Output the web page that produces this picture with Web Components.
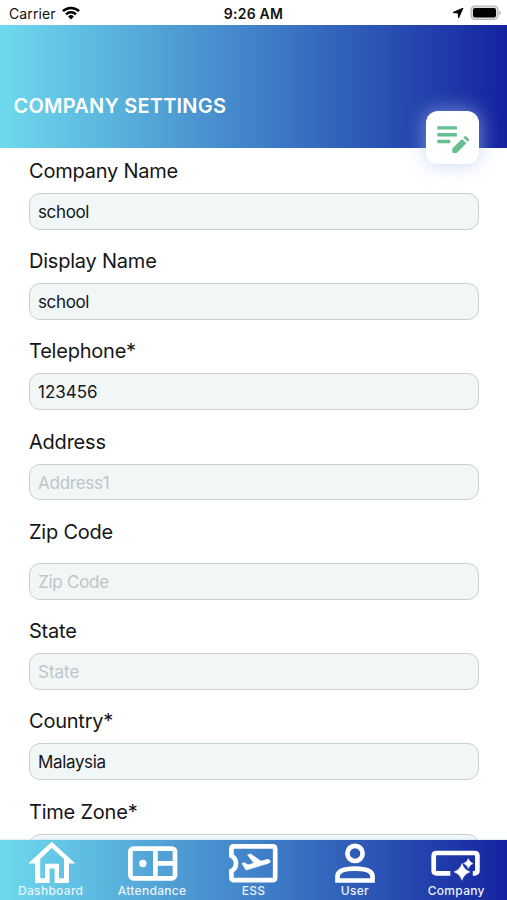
<!DOCTYPE html>
<html lang="en">
<head>
<meta charset="utf-8">
<title>Company Settings</title>
<style>
html,body{margin:0;height:100%}
body{background:#fff;overflow:hidden;font-family:Inter,"Liberation Sans",sans-serif}
</style>
</head>
<body>
<settings-app></settings-app>
<script>
const define = (name, html, setup) => customElements.define(name, class extends HTMLElement {
  connectedCallback() {
    if (this.shadowRoot) return;
    this.attachShadow({ mode: 'open' }).innerHTML = html;
    if (setup) setup(this, this.shadowRoot);
  }
});

define('status-bar', `
<style>
:host{display:grid;grid-template-columns:1fr auto 1fr;align-items:center;height:25px;padding:2px 6px 0 9px;box-sizing:border-box;color:#111;font-size:14px;line-height:20px}
.left,.right{display:flex;align-items:center}
.left{gap:6px;letter-spacing:.1px}
.right{justify-content:flex-end;gap:6px}
b{font-weight:600;font-size:14px;letter-spacing:.25px;margin-right:3px}
svg{display:block;margin-top:-1px}
</style>
<div class="left"><span>Carrier</span>
<svg width="18" height="14" viewBox="0 0 18 14" fill="none" stroke="#000" stroke-width="2.5"><path d="M.9 5.2a11.6 11.6 0 0 1 16.2 0M4 8.3a7.2 7.2 0 0 1 10 0"/><path d="M6.1 10.4a4.2 4.2 0 0 1 5.8 0L9 13.4z" fill="#000" stroke="none"/></svg></div>
<b>9:26 AM</b>
<div class="right">
<svg width="12" height="12" viewBox="0 0 12 12"><path d="M11 1.2 6.6 10.8 6.2 6 1 5.5z" fill="#000" stroke="#000" stroke-width="1" stroke-linejoin="round"/></svg>
<svg width="31" height="16" viewBox="0 0 31 16"><rect x="1" y="1" width="27" height="13.5" rx="4" fill="#ddd" stroke="#b4b4b4" stroke-width="1.2"/><rect x="3" y="3" width="23" height="9.5" rx="2" fill="#000"/><path d="M29.3 5.4q1.5.8 1.5 2.4t-1.5 2.4z" fill="#aaa"/></svg>
</div>`);

define('page-header', `
<style>
:host{display:block;position:relative;height:122.5px;padding:68.5px 13.5px 0;box-sizing:border-box;background:var(--bar-gradient);color:#fff}
h1{margin:0;font-size:20px;line-height:24px;font-weight:600;letter-spacing:.22px;white-space:nowrap}
::slotted([slot=action]){position:absolute;right:28px;top:85.5px}
</style>
<h1><slot></slot></h1><slot name="action"></slot>`);

define('edit-button', `
<style>
:host{display:block;width:53px;height:53px;border-radius:12px;background:#fff;box-shadow:0 0 19px 1px rgba(175,192,240,.62)}
svg{display:block}
</style>
<svg width="53" height="53" viewBox="0 0 53 53" fill="#66bf91"><path d="M11.3 15.2h19.6v3.4H11.3zM11.3 22.1h19.6v3.4H11.3zM11.3 28.8h12.9v3.4H11.3z"/><path d="M26.3 37.6 36 27.9l4.4 4.4-9.7 9.7H27.3q-1 0-1-1zM37.3 26.6l1.2-1.2q.9-.8 1.8 0l2.4 2.4q.8.9 0 1.8l-1.2 1.2z"/></svg>`);

define('form-field', `
<style>
:host{display:flex;flex-direction:column;gap:var(--field-gap,9px);color:#151617}
label{font-size:20px;line-height:25px;letter-spacing:-.22px;white-space:nowrap}
.box{height:36.5px;box-sizing:border-box;border:1.4px solid #c8d0d1;border-radius:11px;background:#f1f6f7;padding:1px 8px 0;font-size:17px;line-height:34px;letter-spacing:-.25px;white-space:nowrap}
.empty{color:#bfc5c7}
</style>
<label></label><div class="box"><span></span></div>`, (el, root) => {
  const label = root.querySelector('label'), value = root.querySelector('span');
  label.textContent = el.getAttribute('label');
  value.textContent = el.getAttribute('value') || el.getAttribute('placeholder');
  if (el.hasAttribute('spacing')) value.style.letterSpacing = el.getAttribute('spacing');
  if (!el.hasAttribute('value')) root.querySelector('.box').classList.add('empty');
});

define('nav-item', `
<style>
:host{display:flex;flex-direction:column;align-items:center;width:101.4px;color:#fff;font-size:12px;line-height:14px}
::slotted(svg){display:block;width:60px;height:44px}
span{letter-spacing:.3px;color:#e9f2fc;font-weight:500;white-space:nowrap}
</style>
<slot name="icon"></slot><span><slot></slot></span>`);

define('tab-bar', `
<style>
:host{display:flex;height:60px;background:var(--bar-gradient);box-shadow:0 -1px 1px rgba(150,200,240,.25);position:relative}
</style><slot></slot>`);

define('settings-app', `
<style>
:host{display:flex;flex-direction:column;height:900px;width:507px;overflow:hidden;background:#fff;--bar-gradient:linear-gradient(90deg,#6edaed 0%,#4182c9 50%,#14239f 100%)}
status-bar,page-header,tab-bar{flex:none}
main{flex:1;min-height:0;overflow:hidden;display:flex;flex-direction:column;gap:19.7px;padding:11.5px 28px 0 29px}
form-field{flex:none}
.zip{--field-gap:18.3px}
</style>
<status-bar></status-bar>
<page-header>COMPANY SETTINGS<edit-button slot="action"></edit-button></page-header>
<main>
<form-field label="Company Name" value="school" spacing="-.35px"></form-field>
<form-field label="Display Name" value="school" spacing="-.35px"></form-field>
<form-field label="Telephone*" value="123456" spacing="0px"></form-field>
<form-field label="Address" placeholder="Address1"></form-field>
<form-field class="zip" label="Zip Code" placeholder="Zip Code"></form-field>
<form-field label="State" placeholder="State" spacing="0px"></form-field>
<form-field label="Country*" value="Malaysia" spacing="-.35px"></form-field>
<form-field label="Time Zone*" placeholder=""></form-field>
</main>
<tab-bar>
<nav-item><svg slot="icon" viewBox="0 0 60 44"><path d="M7.3 23.4 30.7 1.8l23.6 21.6H48V43H33.6V28.5h-5V43H14V23.4zM19.2 19V38.3H24V23.8h14v14.5h5V19L30.7 8z" fill="#fff" fill-rule="evenodd"/></svg>Dashboard</nav-item>
<nav-item><svg slot="icon" viewBox="0 0 60 44" fill="none" stroke="#fff" stroke-width="4.7"><rect x="8.4" y="8.6" width="44.6" height="29.7" rx="3"/><path d="M33.4 8.5V38M33.4 23.4H53"/><circle cx="20.9" cy="23.5" r="3.7" fill="#fff" stroke="none"/></svg>Attendance</nav-item>
<nav-item><svg slot="icon" viewBox="0 0 60 44"><path d="M11 6.3H49.6Q52.2 6.3 52.2 8.9V37.6Q52.2 40.2 49.6 40.2H11Q8.4 40.2 8.4 37.6V31Q13 28.5 13 23.4T8.4 15.8V8.9Q8.4 6.3 11 6.3z" fill="none" stroke="#fff" stroke-width="4.7"/><path d="m19 23.5 2.6-.8 3.3 2.2 6.2-1.6-6.5-8.4 3.1-.9 10.2 7.2 6.2-1.7q2.4-.5 3 1.3.4 1.8-1.8 2.5L23.1 30z" fill="#fff" stroke="#fff" stroke-width=".7"/></svg>ESS</nav-item>
<nav-item><svg slot="icon" viewBox="0 0 60 44" fill="none" stroke="#fff" stroke-width="4.7"><circle cx="30" cy="13.4" r="7.6"/><path d="M12.5 40.5V36.5Q12.5 28.7 30 28.7T47.5 36.5V40.5z"/></svg>User</nav-item>
<nav-item><svg slot="icon" viewBox="0 0 60 44"><path d="M25 33.3H11.3Q8.4 33.3 8.4 30.5V15.8Q8.4 13 11.2 13H49.3Q52.1 13 52.1 15.8V30.5Q52.1 33.3 49.2 33.3H47.5" fill="none" stroke="#fff" stroke-width="4.7" transform="translate(-.7)"/><path d="M36 23.5q1.8 6.2 8 8.4-6.2 2.2-8 8.4-1.8-6.2-8-8.4 6.2-2.2 8-8.4zM42.3 18.5q1.1 3.7 4.8 5-3.7 1.3-4.8 5-1.1-3.7-4.8-5 3.7-1.3 4.8-5z" fill="#fff" stroke="#fff" stroke-width=".5"/></svg>Company</nav-item>
</tab-bar>`);
</script>
</body>
</html>
